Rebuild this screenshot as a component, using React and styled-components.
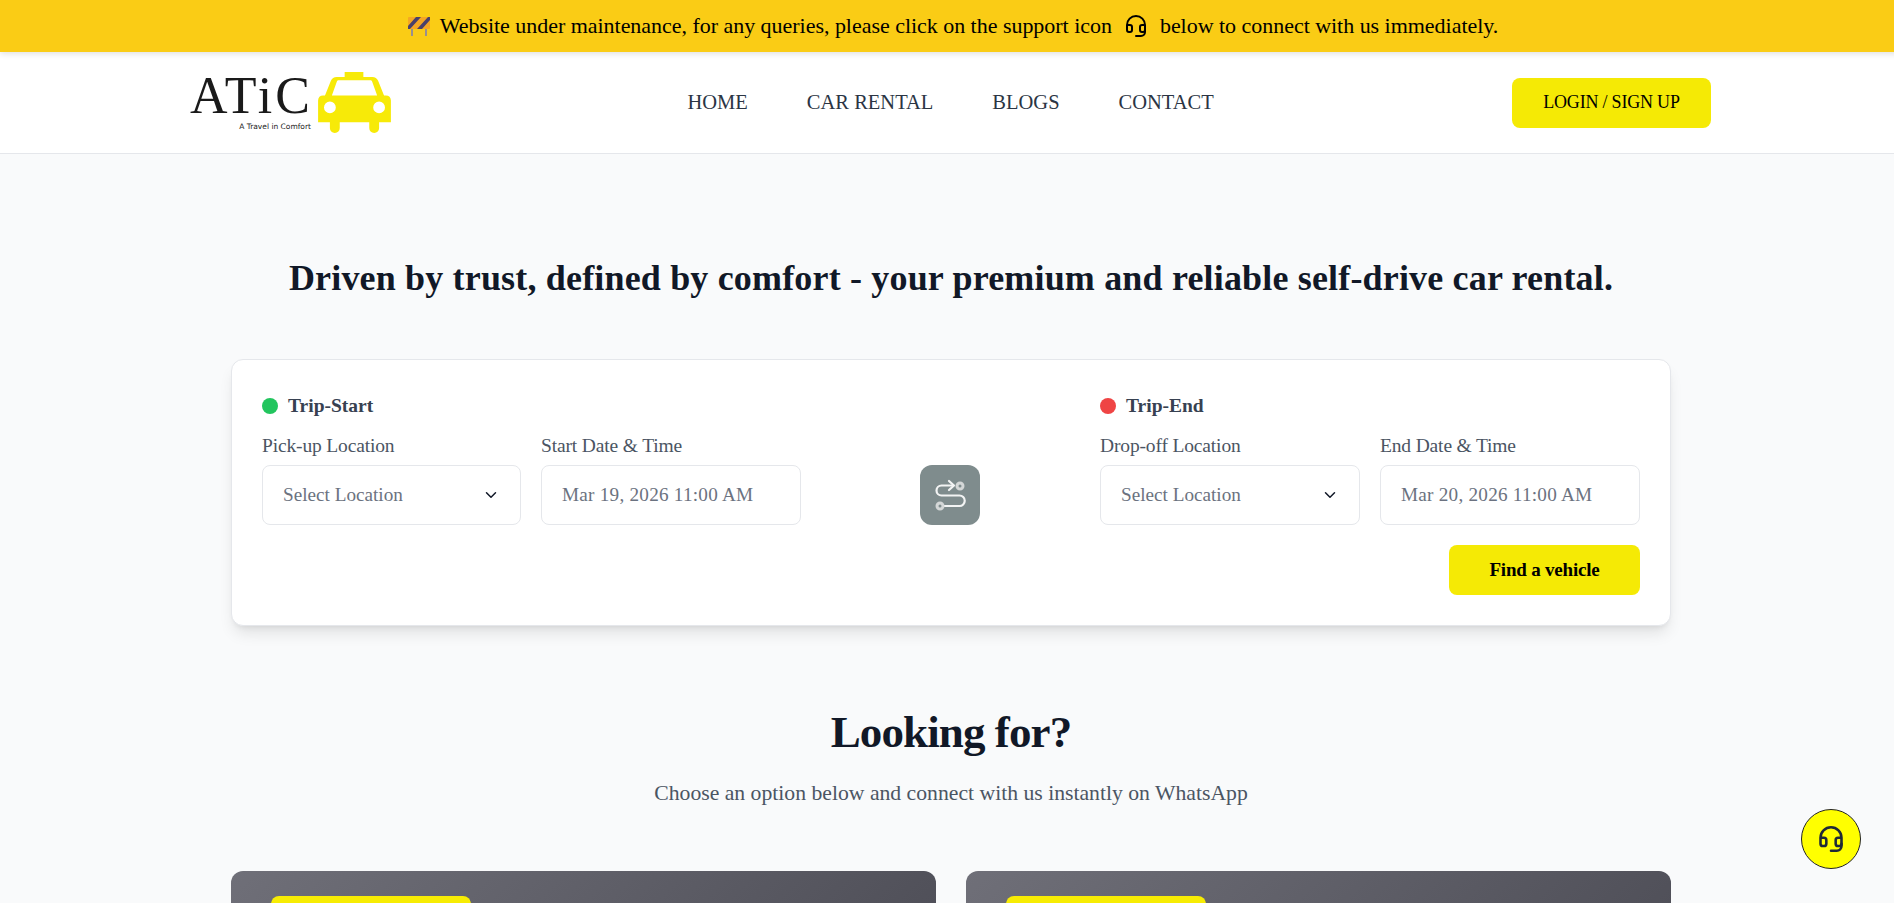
import React from 'react';
import styled, { createGlobalStyle } from 'styled-components';
import { ChevronDown, Headset } from 'lucide-react';

const GlobalStyle = createGlobalStyle`
  html, body { margin:0; padding:0; height:100%; overflow:hidden; background:#f9fafb; }
  * { box-sizing:border-box; }
  body { font-family:"Liberation Serif","Times New Roman",serif; color:#111827; }
`;

const Page = styled.div`
  width:1902px; height:903px; overflow:hidden; background:#f9fafb;
`;
const Banner = styled.div`
  height:52px; background:#facc15; display:flex; align-items:center; justify-content:center; gap:8px;
  font-size:22px; letter-spacing:-0.03px; color:#000; box-shadow:0 2px 6px rgba(0,0,0,.12); position:relative;
`;
const BannerIcon = styled.span`
  display:inline-flex; margin:0 ${p=>p.$right ?? 4}px 0 4px;
`;
const NavBar = styled.header`
  height:102px; background:#fff; border-bottom:1px solid #e5e7eb;
  display:flex; align-items:center; justify-content:space-between; padding:0 191px 0 190px;
`;
const Logo = styled.div`
  width:202px; height:70px; display:flex; align-items:flex-start; gap:7px; padding-top:6px;
`;
const LogoText = styled.div`
  width:121px; display:flex; flex-direction:column;
`;
const LogoName = styled.span`
  font-size:52px; line-height:44px; color:#1a1a1a; letter-spacing:3px; white-space:nowrap;
  font-family:"Liberation Serif",serif; font-weight:400;
`;
const LogoTag = styled.span`
  font-family:"DejaVu Sans",sans-serif; font-size:7.5px; line-height:10px; color:#222; text-align:right; margin-top:4px; white-space:nowrap;
`;
const TaxiSvg = styled.svg`
  margin-top:-2px; flex:none;
`;
const NavLinks = styled.nav`
  display:flex; gap:59px; width:529px;
`;
const NavLink = styled.a`
  font-size:20.5px; color:#2b3544; white-space:nowrap;
`;
const LoginButton = styled.button`
  width:199px; height:50px; border:none; border-radius:8px; background:#f5ea05; color:#000;
  font-family:inherit; font-size:18px; letter-spacing:-0.2px;
`;
const Main = styled.main`
  width:1440px; margin:0 auto;
`;
const Headline = styled.h1`
  margin:0; padding-top:100px; height:205px; text-align:center; font-size:36px; line-height:48px; font-weight:700;
  letter-spacing:0.17px; color:#111827; white-space:nowrap;
`;
const SearchCard = styled.section`
  height:267px; background:#fff; border:1px solid #e5e7eb; border-radius:12px; padding:32px 30px 0;
  box-shadow:0 10px 15px -3px rgba(0,0,0,.1),0 4px 6px -4px rgba(0,0,0,.1);
  display:grid; grid-template-columns:539px 1fr 540px; grid-template-rows:auto auto; row-gap:20px; align-content:start;
`;
const TripColumn = styled.div`
  display:flex; flex-direction:column;
`;
const TripTitle = styled.div`
  display:flex; align-items:center; gap:10px; height:28px; font-size:19.5px; font-weight:700; color:#374151; margin-bottom:14px;
`;
const Dot = styled.span`
  width:16px; height:16px; border-radius:50%; background:${p=>p.$color};
`;
const FieldRow = styled.div`
  display:grid; grid-template-columns:${p=>p.$first}px 260px; column-gap:20px;
`;
const Field = styled.div`
  display:flex; flex-direction:column; gap:7px;
`;
const FieldLabel = styled.label`
  font-size:19.5px; line-height:24px; color:#4b5563; letter-spacing:-0.15px;
`;
const InputBox = styled.div`
  height:60px; background:#fff; border:1px solid #e5e7eb; border-radius:8px; padding:0 20px;
  display:flex; align-items:center; justify-content:space-between; font-size:19.2px; color:#6b7280; white-space:nowrap;
  letter-spacing:${p=>p.$date?'0.24px':'0'};
`;
const SwapCell = styled.div`
  display:flex; justify-content:center; align-items:flex-end; padding-right:1px;
`;
const SwapButton = styled.button`
  width:60px; height:60px; border:none; border-radius:12px; background:#7f8c8d; padding:0;
  display:flex; align-items:center; justify-content:center;
`;
const FindRow = styled.div`
  grid-column:1 / -1; display:flex; justify-content:flex-end;
`;
const FindButton = styled.button`
  width:191px; height:50px; border:none; border-radius:8px; background:#f5ea05; color:#000;
  font-family:inherit; font-size:19px; font-weight:700; letter-spacing:-0.2px;
`;
const Looking = styled.div`
  text-align:center; padding-top:78px; height:245px;
`;
const LookingTitle = styled.h2`
  margin:0; font-size:45px; line-height:56px; font-weight:700; letter-spacing:-0.9px; color:#111827;
`;
const LookingSub = styled.p`
  margin:19px 0 0; font-size:21.7px; line-height:28px; color:#4b5563;
`;
const OptionGrid = styled.div`
  display:grid; grid-template-columns:705px 705px; column-gap:30px;
`;
const OptionCard = styled.div`
  height:300px; border-radius:12px; padding:25px 40px;
  background:linear-gradient(135deg,#6f6f78 0%,#45454e 100%);
`;
const OptionTag = styled.div`
  width:200px; height:60px; border-radius:8px; background:#f7ec04;
`;
const SupportButton = styled.button`
  position:fixed; left:1801px; top:809px; width:60px; height:60px; border-radius:50%; padding:0;
  background:#ffff00; border:1px solid #222; color:#1f2937; display:flex; align-items:center; justify-content:center;
`;

function BarrierIcon(){
  return (
    <svg width="22" height="22" viewBox="0 0 22 22">
      <rect x="3" y="3" width="2" height="18" fill="#9a8f8f"/>
      <rect x="17" y="3" width="2" height="18" fill="#9a8f8f"/>
      <rect x="0" y="2" width="22" height="12" rx="1" fill="#f5a623"/>
      <path d="M0 11 8 2h5L2 14H0zM9 14 20 2h2v3l-8 9z" fill="#4a3f6b"/>
    </svg>
  );
}

function RouteIcon(){
  return (
    <svg width="36" height="36" viewBox="0 0 36 36" fill="none">
      <path d="M21 8.500H9.500a5 5 0 0 0 0 10h18a5.200 5.200 0 0 1 0 10.500H12" stroke="#f3f4f4" strokeWidth="2.200" strokeLinecap="round"/>
      <path d="M17 4l5 4.500-5 4.500" stroke="#f3f4f4" strokeWidth="2.200" strokeLinecap="round" strokeLinejoin="round"/>
      <circle cx="28" cy="9" r="3" stroke="#d4d7d7" strokeWidth="3"/>
      <circle cx="8" cy="29" r="3" stroke="#d4d7d7" strokeWidth="3"/>
    </svg>
  );
}

function TaxiIcon(){
  return (
    <TaxiSvg width="73" height="61" viewBox="0 0 74 62">
      <path fill="#f7ea08" fillRule="evenodd" d="M27 0h19v5h9c3 0 5 1.500 6 4l6 15h2c3 0 5 2 5 5v22H62v6c0 3-2 5-5 5s-5-2-5-5v-6H22v6c0 3-2 5-5 5s-5-2-5-5v-6H0V29c0-3 2-5 5-5h2l6-15c1-2.500 3-4 6-4h8zM19 10l-5 14h46l-5-14c-.5-1-1-1.500-2-1.500H21c-1 0-1.500.5-2 1.500zM12 30a6 6 0 1 0 0 12 6 6 0 0 0 0-12zm50 0a6 6 0 1 0 0 12 6 6 0 0 0 0-12z"/>
    </TaxiSvg>
  );
}

function TripFields({ title, color, first, locLabel, dateLabel, date }){
  return (
    <TripColumn>
      <TripTitle><Dot $color={color}/>{title}</TripTitle>
      <FieldRow $first={first}>
        <Field>
          <FieldLabel>{locLabel}</FieldLabel>
          <InputBox>Select Location<ChevronDown size={18} color="#111827"/></InputBox>
        </Field>
        <Field>
          <FieldLabel>{dateLabel}</FieldLabel>
          <InputBox $date>{date}</InputBox>
        </Field>
      </FieldRow>
    </TripColumn>
  );
}

export default function App(){
  return (
    <Page>
      <GlobalStyle/>
      <Banner>
        <BannerIcon $right={2}><BarrierIcon/></BannerIcon>
        Website under maintenance, for any queries, please click on the support icon
        <BannerIcon><Headset size={24} color="#000"/></BannerIcon>
        below to connect with us immediately.
      </Banner>
      <NavBar>
        <Logo>
          <LogoText>
            <LogoName>ATiC</LogoName>
            <LogoTag>A Travel in Comfort</LogoTag>
          </LogoText>
          <TaxiIcon/>
        </Logo>
        <NavLinks>
          <NavLink>HOME</NavLink>
          <NavLink>CAR RENTAL</NavLink>
          <NavLink>BLOGS</NavLink>
          <NavLink>CONTACT</NavLink>
        </NavLinks>
        <LoginButton>LOGIN / SIGN UP</LoginButton>
      </NavBar>
      <Main>
        <Headline>Driven by trust, defined by comfort - your premium and reliable self-drive car rental.</Headline>
        <SearchCard>
          <TripFields title="Trip-Start" color="#22c55e" first={259} locLabel="Pick-up Location" dateLabel="Start Date & Time" date="Mar 19, 2026 11:00 AM"/>
          <SwapCell><SwapButton><RouteIcon/></SwapButton></SwapCell>
          <TripFields title="Trip-End" color="#ef4444" first={260} locLabel="Drop-off Location" dateLabel="End Date & Time" date="Mar 20, 2026 11:00 AM"/>
          <FindRow><FindButton>Find a vehicle</FindButton></FindRow>
        </SearchCard>
        <Looking>
          <LookingTitle>Looking for?</LookingTitle>
          <LookingSub>Choose an option below and connect with us instantly on WhatsApp</LookingSub>
        </Looking>
        <OptionGrid>
          <OptionCard><OptionTag/></OptionCard>
          <OptionCard><OptionTag/></OptionCard>
        </OptionGrid>
      </Main>
      <SupportButton><Headset size={28} strokeWidth={2.2}/></SupportButton>
    </Page>
  );
}
